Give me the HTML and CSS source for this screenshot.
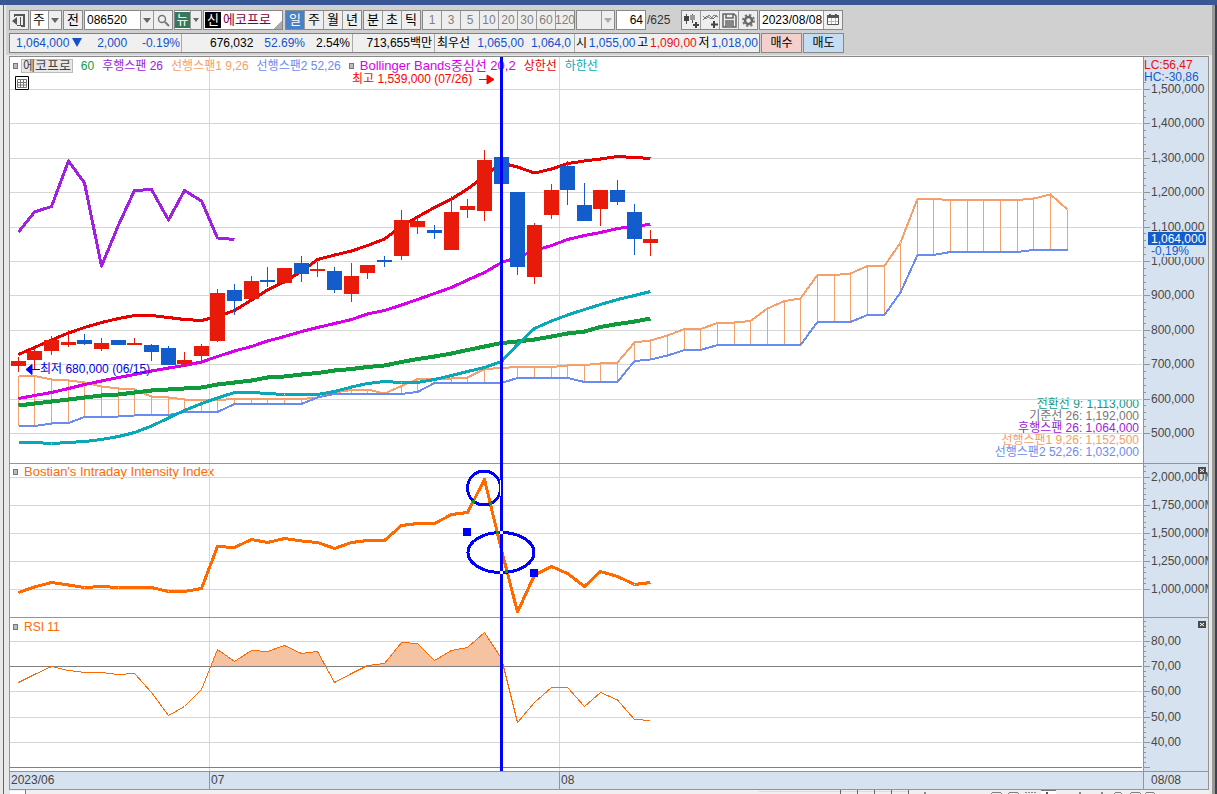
FILE: index.html
```html
<!DOCTYPE html>
<html lang="ko">
<head>
<meta charset="utf-8">
<title>에코프로 차트</title>
<link rel="stylesheet" href="styles.css">
</head>
<body>
<div class="titlebar"></div>
<div class="window">
  <header class="tools">
    <form class="row controls">
      <button type="button" class="btn icon" aria-label="패널">
        <svg width="14" height="14" viewBox="0 0 14 14"><path d="M2 1h11v2H2z" fill="#555"/><path d="M12 1v12H9" fill="none" stroke="#555" stroke-width="2"/><path d="M5 4v8L0 8z" fill="#555"/><path d="M5 12.500h4M8.500 4v8M2.500 1v3" stroke="#555" fill="none"/></svg>
      </button>
      <span class="combo kind">
        <select aria-label="종목 구분"><option>주</option></select><i class="arrow"></i>
      </span>
      <button type="button" class="btn">전</button>
      <span class="combo code">
        <input type="text" value="086520" aria-label="종목코드"><i class="arrow"></i>
        <button type="button" class="search" aria-label="검색"><svg width="13" height="13" viewBox="0 0 13 13"><circle cx="5" cy="5" r="3.500" fill="none" stroke="#777" stroke-width="1.500"/><path d="M8 8l4 4" stroke="#777" stroke-width="2"/></svg></button>
      </span>
      <span class="combo news"><button type="button">뉴</button><i class="arrow small"></i></span>
      <span class="combo name"><b>신</b><span>에코프로</span></span>
      <span class="group period first">
        <button type="button" class="on">일</button><button type="button">주</button><button type="button">월</button><button type="button">년</button>
      </span>
      <span class="group period">
        <button type="button">분</button><button type="button">초</button><button type="button">틱</button>
      </span>
      <span class="group minutes">
        <button type="button">1</button><button type="button">3</button><button type="button">5</button><button type="button">10</button><button type="button">20</button><button type="button">30</button><button type="button">60</button><button type="button">120</button>
      </span>
      <span class="combo unit"><select aria-label="단위" disabled><option></option></select><i class="arrow dim"></i></span>
      <span class="count"><input type="text" value="64" aria-label="표시 개수"><span>/625</span></span>
      <span class="group icons">
        <button type="button" aria-label="봉 추가"><svg width="17" height="17" viewBox="0 0 17 17"><path d="M3.500 2v10M9.500 2v9" stroke="#555"/><path d="M1 4h5v5H1z" fill="#444"/><path d="M7 3h5v5H7z" fill="#999"/><path d="M13 10v6M10 13h6" stroke="#444" stroke-width="2"/></svg></button>
        <button type="button" aria-label="지표 추가"><svg width="17" height="17" viewBox="0 0 17 17"><path d="M1 8l4-4 4 3 3-4 4 2M1 4l3 3 3-4 4 4 4-4" fill="none" stroke="#777"/><path d="M12 9v7M9 12.500h7" stroke="#444" stroke-width="2"/></svg></button>
        <button type="button" aria-label="저장"><svg width="17" height="17" viewBox="0 0 17 17"><path d="M2 2h11l2 2v11H2zM5 2v4h7V2M5 15V9h7v6M6 11h5M6 13h5" fill="none" stroke="#666" stroke-width="1.500"/></svg></button>
        <button type="button" aria-label="설정"><svg width="17" height="17" viewBox="0 0 17 17"><circle cx="8.500" cy="8.500" r="5.500" fill="none" stroke="#777" stroke-width="2" stroke-dasharray="2.300 2"/><circle cx="8.500" cy="8.500" r="3.500" fill="none" stroke="#666" stroke-width="2.500"/></svg></button>
      </span>
      <span class="combo date">
        <input type="text" value="2023/08/08" aria-label="기준일">
        <button type="button" aria-label="달력"><svg width="12" height="12" viewBox="0 0 12 12"><path d="M.5 2.500h11v8H.5z" fill="#fff" stroke="#555"/><path d="M0 1h12v3H0zM2 0h2v2H2zM8 0h2v2H8z" fill="#555"/><path d="M4.500 4v6M8.500 4v6M1 7.500h10" stroke="#bbb"/></svg></button>
      </span>
    </form>
    <div class="row quotes">
      <div class="strip">
        <div class="cell c1 down"><span>1,064,000<svg width="10" height="9" viewBox="0 0 10 9"><path d="M0 0h10L5 9z" fill="#1450c8"/></svg></span><span>2,000</span><span>-0.19%</span></div>
        <div class="cell c2"><span>676,032</span><span class="down">52.69%</span><span>2.54%</span></div>
        <div class="cell c3"><span>713,655백만</span></div>
        <div class="cell c4"><span>최우선</span><span class="down">1,065,00</span><span class="down">1,064,0</span></div>
        <div class="cell c5"><span>시</span><span class="down">1,055,00</span><span>고</span><span class="up">1,090,00</span><span>저</span><span class="down">1,018,00</span></div>
      </div>
      <button type="button" class="trade buy">매수</button>
      <button type="button" class="trade sell">매도</button>
    </div>
  </header>

  <main class="chart">
    <section class="plot">
      <div class="legend">
        <i class="mark"></i><button type="button">에코프로</button>
        <span class="green">60</span><span class="purple">후행스팬 26</span><span class="orange">선행스팬1 9,26</span><span class="sky">선행스팬2 52,26</span>
        <i class="mark"></i><span class="magenta wide">Bollinger Bands중심선 20,2</span><span class="red">상한선</span><span class="teal">하한선</span>
      </div>
      <button type="button" class="table-btn" aria-label="표 보기"><svg width="14" height="14" viewBox="0 0 14 14"><path d="M0 0h14v14H0z" fill="#fff"/><path d="M.5 .5h13v13H.5z" fill="none" stroke="#000"/><path d="M2.500 3.500h9v8h-9zM2.500 6.500h9M2.500 9h9M5.500 3v9M8.500 3v9" fill="none" stroke="#777"/></svg></button>
      <div class="legend lower index"><i class="mark"></i><span class="vivid wide">Bostian's Intraday Intensity Index</span></div>
      <div class="legend lower rsi"><i class="mark"></i><span class="vivid">RSI 11</span></div>
      <ul class="values">
        <li class="jade">전환선 9: 1,113,000</li>
        <li class="gray">기준선 26: 1,192,000</li>
        <li class="purple">후행스팬 26: 1,064,000</li>
        <li class="orange">선행스팬1 9,26: 1,152,500</li>
        <li class="sky">선행스팬2 52,26: 1,032,000</li>
      </ul>
      <svg id="plot" viewBox="10 57 1133 714" preserveAspectRatio="none"></svg>
    </section>
    <aside class="scale"><svg id="scale" viewBox="1144 57 64 714" preserveAspectRatio="none"></svg></aside>
    <div class="dates"><span>2023/06</span><span>07</span><span>08</span></div>
    <div class="dates last"><span>08/08</span></div>
  </main>
  <footer class="bottom">
    <svg width="100%" height="4" viewBox="10 790 1198 4" preserveAspectRatio="none" id="bottom"></svg>
  </footer>
</div>
<script src="chart.js"></script>
</body>
</html>
```
FILE: styles.css
```css
* { box-sizing: border-box; }
body {
  margin: 0;
  height: 100vh;
  overflow: hidden;
  display: flex;
  flex-direction: column;
  background: #e8e8e8;
  color: #000;
  font: 12px/14px "Liberation Sans", "Noto Sans CJK KR", sans-serif;
}
button, input, select {
  font: inherit;
  color: inherit;
  margin: 0;
  padding: 0;
  border: 0;
  border-radius: 0;
  background: none;
  appearance: none;
  opacity: 1;
}
svg { display: block; }
.titlebar { height: 5px; background: #3a5795; flex: none; }
.window {
  flex: 1;
  min-height: 0;
  display: flex;
  flex-direction: column;
  margin-left: 3px;
  border-left: 1px solid #666;
  border-right: 2px solid #3c4250;
  box-shadow: inset -3px 0 #999;
  padding-right: 3px;
}
.tools {
  flex: none;
  display: flex;
  flex-direction: column;
  gap: 3px;
  margin-left: 2px;
  padding: 5px 3px 2px;
  background: #d0d0d0;
}
.row { display: flex; height: 20px; }
.controls { gap: 1px; width: 834px; }
.btn, .combo, .group, .count input {
  height: 20px;
  border: 1px solid #888;
  background: #eee;
  display: flex;
  align-items: center;
  justify-content: center;
  flex: none;
}
.btn { width: 20px; font-size: 13px; }
.combo { background: #fff; justify-content: flex-start; }
.combo select, .combo input { height: 18px; flex: 1; min-width: 0; padding-left: 2px; }
.arrow {
  width: 13px;
  height: 18px;
  border-left: 1px solid #999;
  background: #eee;
  display: flex;
  align-items: center;
  justify-content: center;
}
.arrow::after {
  content: "";
  border: 4px solid transparent;
  border-top: 5px solid #666;
  border-bottom: 0;
}
.arrow.small { width: 11px; }
.arrow.small::after { border-width: 4px 3px 0; }
.arrow.dim::after { border-top-color: #aaa; }
.kind { width: 32px; }
.kind select { font-size: 13px; }
.code { width: 89px; }
.code .search, .date button {
  width: 19px;
  height: 18px;
  border-left: 1px solid #999;
  background: #f0f0f0;
  display: flex;
  align-items: center;
  justify-content: center;
  flex: none;
}
.news { width: 28px; }
.news button { flex: 1; height: 16px; background: #35785a; color: #fff; font-size: 13px; }
.name {
  width: 80px;
  gap: 2px;
  color: #800040;
  font-size: 13px;
  background: linear-gradient(135deg, transparent 50%, #aaa 50%) right bottom / 8px 8px no-repeat, #fff;
}
.name b { width: 16px; height: 16px; line-height: 16px; background: #000; color: #fff; text-align: center; font-weight: 400; margin-left: 1px; }
.group { gap: 1px; background: #999; }
.group button { width: 18px; height: 18px; background: #eee; display: flex; align-items: center; justify-content: center; }
.group .on { background: #4a80c8; color: #fff; }
.period { font-size: 13px; }
.period.first { margin-left: 1px; }
.minutes { color: #808080; }
.unit { width: 39px; background: #eee; }
.count { display: flex; align-items: center; gap: 1px; color: #333; }
.count input { width: 30px; background: #fff; text-align: right; padding-right: 2px; color: #000; }
.icons { margin-left: auto; }
.date { width: 84px; }
.quotes { gap: 1px; }
.strip { width: 751px; display: flex; background: #f0f0f0; border: 1px solid #808080; }
.cell { display: flex; align-items: center; justify-content: space-between; white-space: nowrap; flex: none; border-left: 1px solid #aaa; }
.cell:first-child { border-left: 0; }
.cell svg { display: inline-block; margin-left: 3px; }
.c1 { width: 171px; padding: 0 1px 0 6px; }
.c2 { width: 171px; padding: 0 2px 0 28px; }
.c3 { width: 82px; padding: 0 2px; justify-content: flex-end; }
.c4 { width: 140px; padding: 0 3px 0 2px; }
.c5 { width: 185px; padding: 0 1px; }
.down { color: #1450c8; }
.up { color: #e81010; }
.trade { width: 41px; border: 1px solid #888; flex: none; }
.buy { background: #f5cfcc; }
.sell { background: #c5dcf3; }

.chart {
  flex: 1;
  min-height: 0;
  margin: 1px 3px 0 5px;
  display: grid;
  grid-template: 1fr 18px / 1fr 65px;
  border: 1px solid #949494;
  border-top-color: #888;
}
.plot { position: relative; background: #fff; overflow: hidden; }
.plot > svg { position: absolute; inset: 0; width: 100%; height: 100%; pointer-events: none; z-index: 4; }
.scale { position: relative; background: #d7e2f0; border-left: 1px solid #949494; }
.scale svg { position: absolute; inset: 0; width: 100%; height: 100%; }
.legend { position: absolute; z-index: 3; top: 1px; left: 3px; display: flex; align-items: center; gap: 8px; height: 15px; white-space: nowrap; }
.legend button { height: 14px; padding: 0 1px; border: 1px solid #bbb; background: #e8e8e8; color: #444; line-height: 12px; font-size: 13px; }
.mark { width: 5px; height: 6px; border: 1px solid #777; background: #bbb; }
.legend .mark:first-child { margin-right: -5px; }
.legend .mark:not(:first-child) { margin-right: -2px; }
.legend.lower .mark:first-child { margin-right: -2px; }
.wide { font-size: 13px; }
.legend.lower.index { top: 57%; margin-top: 1px; }
.legend.lower.rsi { top: 79%; margin-top: -2px; }
.table-btn { position: absolute; top: 19px; left: 5px; z-index: 5; }
.values { position: absolute; z-index: 3; right: 4px; top: 48%; margin: -2px 0 0; padding: 0; list-style: none; text-align: right; line-height: 12px; }
.green { color: #0f9b3c; }
.purple { color: #a020e0; }
.orange { color: #f5a06a; }
.sky { color: #6a8cf0; }
.magenta { color: #d800e8; }
.red { color: #e80000; }
.teal { color: #08a8b8; }
.jade { color: #109888; }
.gray { color: #777; }
.vivid { color: #ff6a00; }
.dates {
  border-top: 1px solid #949494;
  background: #d7e2f0;
  color: #444;
  display: grid;
  grid-template-columns: 199fr 350fr 584fr;
  line-height: 16px;
}
.dates span { padding-left: 1px; }
.dates span + span { border-left: 1px solid #949494; }
.dates.last { border-left: 1px solid #949494; display: block; }
.dates.last span { padding-left: 7px; }
.bottom { flex: none; margin: 0 3px 0 6px; height: 4px; background: #f0f0f0; }
#scale text, #plot text { font-size: 12px; }
```
FILE: chart.js
```js
const NS = 'http://www.w3.org/2000/svg';
const plot = document.getElementById('plot');
const scale = document.getElementById('scale');
const bottom = document.getElementById('bottom');

function add(parent, tag, attrs, text) {
  const el = document.createElementNS(NS, tag);
  for (const k in attrs) el.setAttribute(k, attrs[k]);
  if (text) el.textContent = text;
  parent.appendChild(el);
  return el;
}
const rect = (p, x, y, w, h, fill) => add(p, 'rect', { x, y, width: w, height: h, fill, 'shape-rendering': 'crispEdges' });
const px = i => Math.floor(18.2 + 16.65 * i) + 0.5;
const points = ys => ys.map((y, i) => px(i) + ',' + y).join(' ');
const line = (ys, stroke, w) => add(plot, 'polyline', {
  points: points(ys), fill: 'none', stroke, 'stroke-width': w, 'stroke-linejoin': 'round', 'shape-rendering': 'crispEdges'
});

const mainGrid = [89, 123, 158, 192, 227, 261, 295, 330, 364, 399, 433];
const indexGrid = [477, 505, 533, 561, 589];
const rsiGrid = [641, 666, 691, 717, 742];

[...mainGrid, ...indexGrid, ...rsiGrid].forEach(y => rect(plot, 10, y, 1132, 1, '#d6d6d6'));
[209, 559].forEach(x => rect(plot, x, 57, 1, 714, '#d6d6d6'));
[463, 617].forEach(y => rect(plot, 10, y, 1133, 1, '#949494'));
[666, 767].forEach(y => rect(plot, 10, y, 1132, 1, '#808080'));

const spanA = [376, 376, 379.5, 380.5, 382.5, 386.5, 388.5, 389.5, 396.5, 397.5, 399.5, 400, 400, 399, 399, 399, 399, 399, 397.5, 392.5, 390,
  389.5, 393.5, 386, 379, 379, 378.5, 377.5, 369, 368, 367, 367, 367, 365.5, 365, 363.5, 362.5, 342.5, 340.5, 335.5, 329, 329, 323, 322.5,
  321, 308.5, 301, 298.5, 275, 275, 273.5, 266, 266, 242.5, 199, 199, 200, 200, 200, 200, 200, 198.5, 194.5, 209.5];
const spanB = [426, 426, 423.5, 423, 417, 417, 416.5, 415.5, 415, 415, 412, 412, 412, 404, 404, 404, 404, 404, 397.5, 394, 394, 394, 394, 394,
  392, 383, 383, 383, 383, 383, 378, 378, 378, 378, 382, 382, 382, 361, 359.5, 355.5, 350, 350, 345, 345, 345, 345, 345, 345, 322, 322, 322,
  315, 315, 292.5, 255, 255, 252, 252, 252, 252, 252, 250, 250, 250];
spanA.forEach((y, i) => rect(plot, px(i) - 0.5, Math.min(y, spanB[i]), 1, Math.abs(spanB[i] - y), '#f5a06a'));
line(spanA, '#f5a06a', 2);
line(spanB, '#6a8cf0', 2);

line([405.5, 403.5, 401.5, 399.5, 397.5, 395.5, 394.5, 392.5, 390.5, 389.5, 388.5, 387.5, 384.5, 382.5, 380.5, 377.5, 376.5, 374.5, 373, 370.5,
  369, 367, 365.5, 362, 359, 356.5, 353.5, 350, 346.5, 343, 341.5, 339.5, 336.5, 333.5, 331.5, 327, 324, 321.5, 318.5], '#0f9b3c', 4);
line([442.5, 442.5, 443.5, 442.5, 441.5, 439.5, 436.5, 432.5, 426, 418, 410.5, 403.5, 398, 392.5, 392.5, 393.5, 394.5, 394.5, 394.5, 391.5,
  387, 383.5, 381.5, 382.5, 382.5, 379.5, 375.5, 371.5, 367.5, 361.5, 344.5, 328.5, 321, 315, 309.5, 304.5, 299.5, 295.5, 291.5], '#08a8b8', 3);
line([398.5, 395.5, 392.5, 388.5, 384.5, 381, 377.5, 374.5, 371, 368, 365.5, 362, 356.5, 351, 346.5, 341, 336.5, 331.5, 327.5, 323.5,
  319.5, 314, 310.5, 305, 299.5, 293.5, 287.5, 280, 272.5, 262.5, 257.5, 250.5, 245.5, 239.5, 235.5, 232.5, 228.5, 226, 224.5], '#d800e8', 3);
line([354.5, 347.5, 340, 333, 327.5, 322.5, 318.5, 315.5, 315.5, 317.5, 319.5, 320.5, 316.5, 310.5, 300, 290, 281.5, 271.5, 259.5, 255,
  251, 245.5, 239, 226.5, 217, 207.5, 199, 189, 176, 163, 167, 173, 169, 163.5, 161, 159, 156.5, 157.5, 158.5], '#e80000', 3);
line([232, 212, 206.5, 161, 183, 266, 225, 190.5, 189.5, 220, 190.5, 201, 238, 239.5], '#a020e0', 3);

/* direction, body top, body bottom, wick top, wick bottom */
const candles = [
  ['u', 361, 366, 357, 372], ['u', 351, 360, 349, 370], ['u', 340, 351, 336, 355], ['u', 342, 345, 330, 347], ['d', 340, 344, 334, 345],
  ['u', 343, 349, 338, 351], ['d', 340, 345, 340, 345], ['u', 343, 345, 338, 345], ['d', 345, 352, 344, 361], ['d', 348, 365, 346, 365],
  ['u', 360, 364, 352, 367], ['u', 346, 356, 344, 360], ['u', 293, 341, 289, 342], ['d', 290, 301, 284, 315], ['u', 281, 299, 276, 299],
  ['d', 280, 282, 267, 287], ['u', 268, 283, 268, 284], ['d', 263, 274, 256, 282], ['u', 269, 271, 262, 277], ['d', 271, 290, 267, 293],
  ['u', 276, 294, 263, 302], ['u', 265, 273, 265, 279], ['d', 260, 262, 256, 267], ['u', 220, 256, 210, 260], ['u', 221, 227, 218, 234],
  ['d', 230, 233, 225, 239], ['u', 212, 250, 196, 250], ['u', 206, 210, 199, 218], ['u', 160, 211, 150, 221], ['d', 157, 184, 157, 184],
  ['d', 192, 267, 192, 275], ['u', 225, 277, 223, 284], ['u', 190, 215, 184, 219], ['d', 166, 190, 161, 205], ['d', 205, 221, 183, 221],
  ['u', 190, 209, 190, 226], ['d', 190, 202, 180, 205], ['d', 212, 239, 204, 255], ['u', 239, 243, 230, 256]];
candles.forEach(([dir, top, bot, hi, lo], i) => {
  const c = dir === 'u' ? '#e81a0a' : '#125ccc';
  const x = px(i) - 0.5;
  rect(plot, x, hi, 1, lo - hi, c);
  rect(plot, x - 7, top, 15, bot - top, c);
});

line([592.5, 587, 582.5, 585, 587.5, 586.5, 587.5, 587.5, 587.5, 591.5, 591.5, 588.5, 546.5, 547.5, 539.5, 542.5, 538.5, 541, 542.5, 548.5,
  542.5, 540.5, 540.5, 525.5, 523.5, 523.5, 514.5, 512.5, 479.5, 550, 612, 575, 566.5, 573.5, 586.5, 571.5, 576.5, 584.5, 582.5], '#ff6a00', 3);

const rsi = [682.5, 674.5, 666.5, 670.5, 672.5, 672.5, 674.5, 673.5, 692.5, 715.5, 706.5, 689.5, 649.5, 661.5, 650.5, 651.5, 645.5, 653.5,
  651.5, 682.5, 673.5, 665.5, 663.5, 642.5, 643.5, 660.5, 650.5, 647.5, 632.5, 658.5, 722.5, 702.5, 687.5, 687.5, 706.5, 692.5, 700, 719.5, 720.5];
const clip = add(plot, 'clipPath', { id: 'over' });
add(clip, 'rect', { x: 150, y: 618, width: 500, height: 48 });
add(plot, 'polygon', { points: points(rsi) + ' 650,666 650,760 18,760', fill: '#f5c2a2', 'clip-path': 'url(#over)' });
line(rsi, '#ff6a00', 1);

const shape = (cx, cy, rx, ry) => add(plot, 'ellipse', { cx, cy, rx, ry, fill: 'none', stroke: '#0000ff', 'stroke-width': 3, 'shape-rendering': 'crispEdges' });
shape(484, 488, 16.5, 17);
shape(501, 552.5, 33, 20);
rect(plot, 463, 528, 8, 8, '#0000ff');
rect(plot, 530, 569, 8, 8, '#0000ff');
rect(plot, 500, 57, 3, 714, '#0000ff');
rect(plot, 500, 480, 1, 16, '#ffffff');
[531, 571].forEach(y => rect(plot, 500, y, 3, 3, '#ffffff'));
[[472, 500], [489, 502], [496, 531], [505, 570]].forEach(([x, y]) => rect(plot, x, y, 3, 3, '#109810'));

add(plot, 'text', { x: 352, y: 83, fill: '#ff0000' }, '최고 1,539,000 (07/26)');
add(plot, 'path', { d: 'M479 79.500h8M487 75l7 4.500-7 4.500z', fill: '#ff0000', stroke: '#ff0000' });
add(plot, 'text', { x: 40, y: 373, fill: '#0000e0' }, '최저 680,000 (06/15)');
add(plot, 'path', { d: 'M40 369.500h-8M32 364.500l-6 5 6 5z', fill: '#0000ff', stroke: '#0000ff' });

[463, 617].forEach(y => rect(scale, 1144, y, 64, 1, '#949494'));
const ticks = (grid, labels, step, from) => {
  for (let y = grid[grid.length - 1]; y > from; y -= step) rect(scale, 1144, Math.round(y), 2, 1, '#949494');
  grid.forEach((y, i) => {
    rect(scale, 1144, y, 6, 1, '#949494');
    if (labels[i]) add(scale, 'text', { x: 1151, y: y + 4, fill: '#484848' }, labels[i]);
  });
};
ticks(mainGrid, ['1,500,000', '1,400,000', '1,300,000', '1,200,000', '1,100,000', '1,000,000', '900,000', '800,000', '700,000', '600,000', '500,000'], 6.88, 82);
ticks(indexGrid, ['2,000,000M', '1,750,000M', '1,500,000M', '1,250,000M', '1,000,000M'], 5.6, 465);
ticks([...rsiGrid, 767], ['80,00', '70,00', '60,00', '50,00', '40,00'], 5.05, 619);
add(scale, 'text', { x: 1144, y: 69, fill: '#e81010' }, 'LC:56,47');
add(scale, 'text', { x: 1144, y: 81, fill: '#125ccc' }, 'HC:-30,86');
rect(scale, 1150, 245, 54, 12, '#d7e2f0');
add(scale, 'text', { x: 1151, y: 255, fill: '#125ccc' }, '-0,19%');
rect(scale, 1148, 232, 58, 13, '#125ccc');
add(scale, 'text', { x: 1151, y: 243, fill: '#ffffff' }, '1,064,000');
[467, 621].forEach(y => {
  rect(scale, 1198, y, 8, 7, '#484848');
  add(scale, 'path', { d: `M1200 ${y + 2}l4 3M1204 ${y + 2}l-4 3`, stroke: '#ffffff' });
});

/* top edge of the scrollbar and its tools */
rect(bottom, 10, 791, 15, 3, '#ffffff');
rect(bottom, 25, 790, 1, 4, '#777777');
[[758, 81], [840, 16], [857, 16], [874, 16], [891, 16]].forEach(([x, w]) => {
  rect(bottom, x, 791, w, 1, '#dddddd');
  rect(bottom, x + w, 790, 1, 4, '#666666');
});
rect(bottom, 1040, 790, 15, 1, '#777777');
rect(bottom, 1040, 791, 15, 3, '#ffffff');
rect(bottom, 1045, 792, 2, 2, '#555555');
[[991, 9], [1008, 9], [1114, 6], [1130, 9], [1145, 8]].forEach(([x, w]) => {
  rect(bottom, x, 792, w, 1, '#808080');
  rect(bottom, x - 1, 793, 1, 1, '#808080');
  rect(bottom, x + w, 793, 1, 1, '#808080');
});
[1024, 1027, 1030, 1033].forEach(x => rect(bottom, x, 792, 2, 1, '#888888'));
[923, 1078, 1100].forEach(x => rect(bottom, x, 792, 2, 2, '#888888'));
```
